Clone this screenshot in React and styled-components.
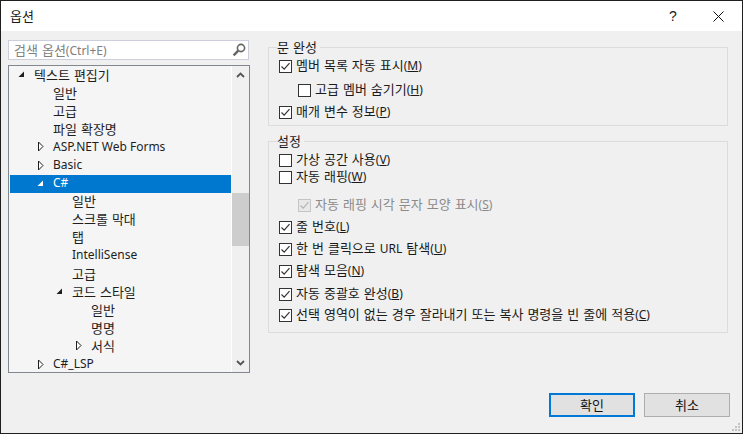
import styled, { createGlobalStyle } from "styled-components"

const GlobalStyle = createGlobalStyle`
    html, body {
        margin: 0;
        padding: 0;
        background: #f0f0f0;
    }
    * {
        box-sizing: border-box;
    }
`

const Dialog = styled.div`
    position: relative;
    width: 743px;
    height: 434px;
    display: flex;
    flex-direction: column;
    border: 1px solid #1f1f1f;
    background: #f0f0f0;
    color: #1a1a1a;
    font-family: "Noto Sans CJK KR", "Noto Sans", sans-serif;
    font-size: 13px;
    word-spacing: 1.1px;
    overflow: hidden;
`

const Latin = styled.span`
    font-family: "Noto Sans", sans-serif;
    font-size: 12px;
    word-spacing: 0;
`

const TitleBar = styled.div`
    height: 30px;
    flex: none;
    display: flex;
    align-items: center;
    background: #fff;
    padding-left: 9px;
`

const Title = styled.span`
    flex: 1;
    padding-bottom: 1px;
`

const HelpButton = styled.span`
    width: 46px;
    text-align: center;
    font-family: "Liberation Sans", sans-serif;
    font-size: 14px;
    padding-bottom: 1px;
`

const CloseButton = styled.span`
    width: 46px;
    height: 30px;
    padding-right: 2px;
    display: flex;
    align-items: center;
    justify-content: center;
`

const Main = styled.div`
    flex: 1;
    display: flex;
    padding: 9px 14px 0 7px;
    min-height: 0;
`

const LeftColumn = styled.div`
    width: 242px;
    flex: none;
    display: flex;
    flex-direction: column;
`

const SearchBox = styled.div`
    height: 20px;
    display: flex;
    align-items: center;
    justify-content: space-between;
    border: 1px solid #cccedb;
    background: #fff;
    color: #808080;
    padding: 0 2px 1px 5px;
    width: 241px;
`

const TreePanel = styled.div`
    height: 309px;
    margin-top: 5px;
    display: flex;
    border: 1px solid #828790;
    background: #f5f5f5;
    overflow: hidden;
`

const TreeList = styled.div`
    width: 221px;
    margin-left: 1px;
    flex: none;
    overflow: hidden;
`

const TreeRow = styled.div`
    height: 18.1px;
    display: flex;
    align-items: center;
    white-space: nowrap;
    padding-left: ${(p) => 8 + p.$level * 19}px;
    padding-bottom: 1px;
    line-height: 16px;
    background: ${(p) => (p.$selected ? "#0078d0" : "transparent")};
    color: ${(p) => (p.$selected ? "#fff" : "#1e1e1e")};
`

const ArrowSlot = styled.span`
    width: 16px;
    height: 11px;
    flex: none;
    display: flex;
    align-items: center;
`

const Scrollbar = styled.div`
    flex: 1;
    display: flex;
    flex-direction: column;
    align-items: stretch;
    border-left: 1px solid #fff;
    background: #f0f0f0;
`

const ScrollArrow = styled.div`
    height: 18px;
    display: flex;
    align-items: center;
    justify-content: center;
`

const ScrollTrack = styled.div`
    flex: 1;
    padding-top: ${(p) => p.$offset}px;
`

const ScrollThumb = styled.div`
    height: 53px;
    background: #cdcdcd;
`

const RightColumn = styled.div`
    flex: 1;
    margin-left: 18px;
    display: flex;
    flex-direction: column;
`

const Group = styled.fieldset`
    margin: ${(p) => p.$top}px 0 0;
    padding: 0 0 0 10px;
    height: ${(p) => p.$height}px;
    border: 1px solid #dcdcdc;
    min-width: 0;
`

const GroupTitle = styled.legend`
    padding: 0 3px 0 0;
    margin-left: -2px;
    line-height: 13px;
    height: 14px;
`

const OptionRow = styled.div`
    display: flex;
    align-items: center;
    height: 16px;
    margin-top: ${(p) => p.$top}px;
    margin-left: ${(p) => (p.$nested ? 19 : 0)}px;
    color: ${(p) => (p.$disabled ? "#8a8a8a" : "#1a1a1a")};
    white-space: nowrap;
`

const OptionText = styled.span`
    line-height: 14px;
    padding-bottom: 2px;
`

const Box = styled.span`
    width: 13px;
    height: 13px;
    flex: none;
    margin-right: 4px;
    display: flex;
    align-items: center;
    justify-content: center;
    border: 1px solid ${(p) => (p.$disabled ? "#c4c4c4" : "#333")};
    background: ${(p) => (p.$disabled ? "#e8e8e8" : "#fff")};
`

const Key = styled.span`
    text-decoration: underline;
    text-underline-offset: 1px;
`

const Footer = styled.div`
    height: 60px;
    flex: none;
    display: flex;
    justify-content: flex-end;
    gap: 9px;
    padding: 20px 12px 0 0;
`

const Button = styled.button`
    width: 86px;
    height: 24px;
    padding: 0 0 1px;
    font: inherit;
    color: #111;
    background: #e1e1e1;
    border: ${(p) => (p.$primary ? "2px solid #0078d7" : "1px solid #adadad")};
`

const Grip = styled.svg`
    position: absolute;
    right: 2px;
    bottom: 2px;
`

function Check({ color = "#333" }) {
    return (
        <svg width="11" height="11" viewBox="0 0 11 11">
            <path d="M1.5 5.5L4.2 8.2L9.5 2.2" fill="none" stroke={color} strokeWidth="1.2" />
        </svg>
    )
}

function Arrow({ open, light }) {
    if (open) {
        return (
            <svg width="7" height="7" viewBox="0 0 7 7">
                <path d="M6 0.5V6H0.5Z" fill={light ? "#fff" : "#1e1e1e"} />
            </svg>
        )
    }
    return (
        <svg width="7" height="11" viewBox="0 0 7 11">
            <path d="M1.5 1V10L6 5.5Z" fill="#fff" stroke="#1e1e1e" />
        </svg>
    )
}

const treeItems = [
    { label: "텍스트 편집기", level: 0, arrow: "open" },
    { label: "일반", level: 1 },
    { label: "고급", level: 1 },
    { label: "파일 확장명", level: 1 },
    { label: "ASP.NET Web Forms", level: 1, arrow: "closed", latin: true },
    { label: "Basic", level: 1, arrow: "closed", latin: true },
    { label: "C#", level: 1, arrow: "open", selected: true, latin: true },
    { label: "일반", level: 2 },
    { label: "스크롤 막대", level: 2 },
    { label: "탭", level: 2 },
    { label: "IntelliSense", level: 2, latin: true },
    { label: "고급", level: 2 },
    { label: "코드 스타일", level: 2, arrow: "open" },
    { label: "일반", level: 3 },
    { label: "명명", level: 3 },
    { label: "서식", level: 3, arrow: "closed" },
    { label: "C#_LSP", level: 1, arrow: "closed", latin: true },
]

function Option({ text, mnemonic, checked, top, nested, disabled }) {
    return (
        <OptionRow $top={top} $nested={nested} $disabled={disabled}>
            <Box $disabled={disabled}>{checked && <Check color={disabled ? "#b5b5b5" : "#333"} />}</Box>
            <OptionText>
                {text}
                <Latin>
                    (<Key>{mnemonic}</Key>)
                </Latin>
            </OptionText>
        </OptionRow>
    )
}

function App() {
    return (
        <Dialog>
            <GlobalStyle />
            <TitleBar>
                <Title>옵션</Title>
                <HelpButton>?</HelpButton>
                <CloseButton>
                    <svg width="11" height="11" viewBox="0 0 11 11">
                        <path d="M0.5 0.5L10.5 10.5M10.5 0.5L0.5 10.5" stroke="#111" fill="none" />
                    </svg>
                </CloseButton>
            </TitleBar>
            <Main>
                <LeftColumn>
                    <SearchBox>
                        <span>
                            검색 옵션<Latin>(Ctrl+E)</Latin>
                        </span>
                        <svg width="14" height="14" viewBox="0 0 14 14">
                            <circle cx="9" cy="5" r="3.6" fill="none" stroke="#666" strokeWidth="1.6" />
                            <path d="M6.3 7.7L1.6 12.4" stroke="#666" strokeWidth="2.4" />
                        </svg>
                    </SearchBox>
                    <TreePanel>
                        <TreeList>
                            {treeItems.map((item, i) => (
                                <TreeRow key={i} $level={item.level} $selected={item.selected}>
                                    <ArrowSlot>
                                        {item.arrow && <Arrow open={item.arrow === "open"} light={item.selected} />}
                                    </ArrowSlot>
                                    {item.latin ? <Latin>{item.label}</Latin> : item.label}
                                </TreeRow>
                            ))}
                        </TreeList>
                        <Scrollbar>
                            <ScrollArrow>
                                <svg width="9" height="6" viewBox="0 0 9 6">
                                    <path d="M1 5L4.5 1.5L8 5" fill="none" stroke="#555" strokeWidth="1.8" />
                                </svg>
                            </ScrollArrow>
                            <ScrollTrack $offset={109}>
                                <ScrollThumb />
                            </ScrollTrack>
                            <ScrollArrow>
                                <svg width="9" height="6" viewBox="0 0 9 6">
                                    <path d="M1 1L4.5 4.5L8 1" fill="none" stroke="#555" strokeWidth="1.8" />
                                </svg>
                            </ScrollArrow>
                        </Scrollbar>
                    </TreePanel>
                </LeftColumn>
                <RightColumn>
                    <Group $top={0} $height={86}>
                        <GroupTitle>문 완성</GroupTitle>
                        <Option text="멤버 목록 자동 표시" mnemonic="M" checked top={4} />
                        <Option text="고급 멤버 숨기기" mnemonic="H" nested top={8} />
                        <Option text="매개 변수 정보" mnemonic="P" checked top={6} />
                    </Group>
                    <Group $top={8} $height={199}>
                        <GroupTitle>설정</GroupTitle>
                        <Option text="가상 공간 사용" mnemonic="V" top={4} />
                        <Option text="자동 래핑" mnemonic="W" top={1} />
                        <Option text="자동 래핑 시각 문자 모양 표시" mnemonic="S" checked nested disabled top={12} />
                        <Option text="줄 번호" mnemonic="L" checked top={6} />
                        <Option
                            text={
                                <>
                                    한 번 클릭으로 <Latin>URL</Latin> 탐색
                                </>
                            }
                            mnemonic="U"
                            checked
                            top={6}
                        />
                        <Option text="탐색 모음" mnemonic="N" checked top={6} />
                        <Option text="자동 중괄호 완성" mnemonic="B" checked top={7} />
                        <Option text="선택 영역이 없는 경우 잘라내기 또는 복사 명령을 빈 줄에 적용" mnemonic="C" checked top={5} />
                    </Group>
                </RightColumn>
            </Main>
            <Footer>
                <Button $primary>확인</Button>
                <Button>취소</Button>
            </Footer>
            <Grip width="8" height="8" viewBox="0 0 8 8">
                <path d="M6 0h2v2H6zM3 3h2v2H3zM6 3h2v2H6zM0 6h2v2H0zM3 6h2v2H3zM6 6h2v2H6z" fill="#c4c4c4" />
            </Grip>
        </Dialog>
    )
}

export default App
